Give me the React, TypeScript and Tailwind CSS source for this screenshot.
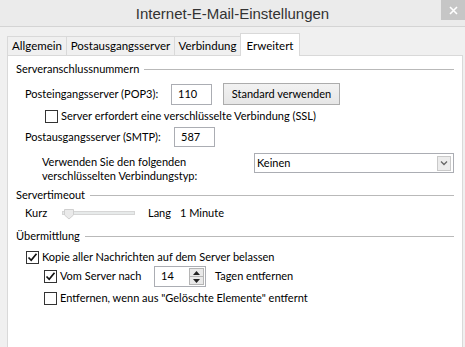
import React from "react";

const font = { fontFamily: 'Lato, "Liberation Sans", Arial, sans-serif' };

function Check({ checked }: { checked?: boolean }) {
  return (
    <div className="w-[13px] h-[13px] border border-[#333333] bg-white flex items-center justify-center shrink-0">
      {checked && (
        <svg width="11" height="11" viewBox="0 0 11 11">
          <path d="M1.5 5.5 L4.2 8.3 L9.5 1.8" fill="none" stroke="#111" strokeWidth="1.7" />
        </svg>
      )}
    </div>
  );
}

function GroupHeader({ label }: { label: string }) {
  return (
    <div className="flex items-center h-[14px]">
      <span className="leading-[14px]">{label}</span>
      <div className="flex-1 h-px bg-[#b9b9b9] ml-[5px]" />
    </div>
  );
}

function Tab({ label, w, active }: { label: string; w: string; active?: boolean }) {
  if (active) {
    return (
      <div
        className={`${w} h-[23px] -mb-px bg-white border border-b-0 border-[#d9d9d9] flex items-start justify-center pt-[3px] relative z-10 text-[11.5px]`}
      >
        {label}
      </div>
    );
  }
  return (
    <div
      className={`${w} h-[19px] bg-[#f0f0f0] border border-[#d9d9d9] border-b-0 -mr-px flex items-center justify-center text-[11.5px]`}
    >
      {label}
    </div>
  );
}

export default function App() {
  return (
    <div
      className="w-[465px] h-[347px] bg-[#f0f0f0] overflow-hidden relative text-[11px] text-black whitespace-nowrap"
      style={font}
    >
      {/* title bar */}
      <div className="h-[27px] bg-[#ebebeb] border-b border-[#d4d4d4] flex items-center justify-center relative">
        <span
          className="text-[15px] text-[#333333] leading-none"
          style={{ fontFamily: '"Liberation Sans", Arial, sans-serif' }}
        >
          Internet-E-Mail-Einstellungen
        </span>
        <div className="absolute right-0 top-0 w-[24px] h-[20px] bg-[#c6c6c6] flex items-center justify-center">
          <svg width="9" height="9" viewBox="0 0 9 9">
            <path d="M1 1 L8 8 M8 1 L1 8" stroke="#fff" strokeWidth="1.6" />
          </svg>
        </div>
      </div>

      {/* tabs */}
      <div className="flex items-end pl-[7px] mt-[6px]">
        <Tab label="Allgemein" w="w-[60px]" />
        <Tab label="Postausgangsserver" w="w-[109px]" />
        <Tab label="Verbindung" w="w-[67px]" />
        <Tab label="Erweitert" w="w-[60px]" active />
      </div>

      {/* panel */}
      <div className="ml-[7px] w-[456px] h-[300px] bg-white border border-[#d9d9d9] px-[8px] pt-[6px]">
        <GroupHeader label="Serveranschlussnummern" />

        <div className="flex items-center h-[22px] mt-[7px]">
          <span className="ml-[9px] w-[146px]">Posteingangsserver (POP3):</span>
          <div className="w-[41px] h-[21px] border border-[#abadb3] flex items-center pl-[6px]">110</div>
          <div className="ml-[11px] w-[117px] h-[22px] border border-[#acacac] bg-gradient-to-b from-[#f2f2f2] to-[#e6e6e6] flex items-center justify-center">
            Standard verwenden
          </div>
        </div>

        <div className="flex items-center h-[16px] mt-[3px] ml-[29px] gap-[3px]">
          <Check />
          <span>Server erfordert eine verschlüsselte Verbindung (SSL)</span>
        </div>

        <div className="flex items-center h-[20px] mt-[3px]">
          <span className="ml-[9px] w-[149px]">Postausgangsserver (SMTP):</span>
          <div className="w-[41px] h-[20px] border border-[#abadb3] flex items-center pl-[6px]">587</div>
        </div>

        <div className="flex items-start mt-[6px] h-[30px]">
          <div className="ml-[26px] w-[212px] pt-[2px] leading-[14px]">
            Verwenden Sie den folgenden
            <br />
            verschlüsselten Verbindungstyp:
          </div>
          <div className="flex-1 h-[20px] border border-[#abadb3] flex items-center pl-[2px] justify-between pr-[2px]">
            <span>Keinen</span>
            <div className="w-[14px] h-[15px] border border-[#c9c9c9] bg-[#ececec] flex items-center justify-center">
              <svg width="8" height="6" viewBox="0 0 8 6">
                <path d="M1 1.5 L4 4.5 L7 1.5" fill="none" stroke="#666" strokeWidth="1.3" />
              </svg>
            </div>
          </div>
        </div>

        <div className="mt-[5px]">
          <GroupHeader label="Servertimeout" />
        </div>

        <div className="flex items-center h-[14px] mt-[4px]">
          <span className="ml-[9px] w-[37px]">Kurz</span>
          <div className="relative w-[73px] h-[4px] bg-[#e7eaea] border border-[#d6d6d6]">
            <svg className="absolute left-[1px] -top-[3px]" width="10" height="11" viewBox="0 0 10 11">
              <path d="M0.5 0.5 H9.5 V6 L5 10 L0.5 6 Z" fill="#eaeaea" stroke="#cfcfcf" />
            </svg>
          </div>
          <span className="ml-[13px]">Lang</span>
          <span className="ml-[9px]">1 Minute</span>
        </div>

        <div className="mt-[9px]">
          <GroupHeader label="Übermittlung" />
        </div>

        <div className="flex items-center h-[16px] mt-[6px] ml-[10px] gap-[3px]">
          <Check checked />
          <span>Kopie aller Nachrichten auf dem Server belassen</span>
        </div>

        <div className="flex items-center h-[21px] mt-[1px] ml-[28px]">
          <Check checked />
          <span className="ml-[3px] w-[94px]">Vom Server nach</span>
          <div className="w-[52px] h-[21px] border border-[#abadb3] flex items-center justify-between pl-[6px] pr-[1px]">
            <span>14</span>
            <div className="w-[15px] h-[17px] border border-[#b5b5b5] bg-[#e9e9e9] flex flex-col">
              <div className="flex-1 flex items-center justify-center border-b border-[#b5b5b5]">
                <svg width="7" height="4" viewBox="0 0 7 4">
                  <path d="M0 4 L3.5 0 L7 4 Z" fill="#222" />
                </svg>
              </div>
              <div className="flex-1 flex items-center justify-center">
                <svg width="7" height="4" viewBox="0 0 7 4">
                  <path d="M0 0 L3.5 4 L7 0 Z" fill="#222" />
                </svg>
              </div>
            </div>
          </div>
          <span className="ml-[9px]">Tagen entfernen</span>
        </div>

        <div className="flex items-center h-[16px] mt-[3px] ml-[28px] gap-[3px]">
          <Check />
          <span>Entfernen, wenn aus "Gelöschte Elemente" entfernt</span>
        </div>
      </div>
    </div>
  );
}
